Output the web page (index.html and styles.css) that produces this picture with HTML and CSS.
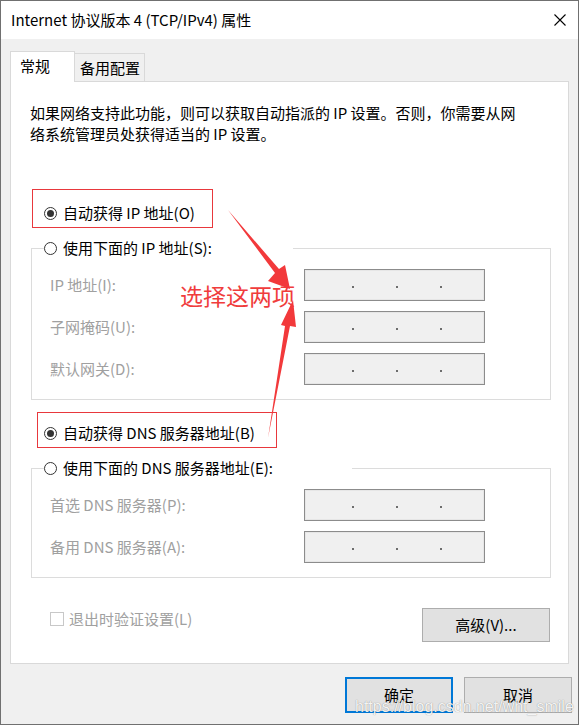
FILE: index.html
```html
<!DOCTYPE html>
<html lang="zh-CN">
<head>
<meta charset="utf-8">
<title>Internet 协议版本 4 (TCP/IPv4) 属性</title>
<link rel="stylesheet" href="styles.css">
</head>
<body>
<div class="stage">
  <div class="window">
    <div class="titlebar">
      <span class="title">Internet 协议版本 4 (TCP/IPv4) 属性</span>
      <svg class="close" width="12" height="12" viewBox="0 0 12 12"><path d="M0.5 0.5 L11.5 11.5 M11.5 0.5 L0.5 11.5" stroke="#000" stroke-width="1.1" fill="none"/></svg>
    </div>
    <div class="tabs">
      <div class="tab active">常规</div>
      <div class="tab inactive">备用配置</div>
    </div>
    <div class="panel">
      <p class="intro">如果网络支持此功能，则可以获取自动指派的 IP 设置。否则，你需要从网<br>络系统管理员处获得适当的 IP 设置。</p>

      <div class="radio-row row-ip"><span class="radio checked"></span><span>自动获得 IP 地址(O)</span></div>
      <fieldset class="group">
        <legend class="lg lg-ip"><span class="radio"></span><span>使用下面的 IP 地址(S):</span></legend>
        <div class="field"><label>IP 地址(I):</label><div class="ipbox"><i></i><i></i><i></i></div></div>
        <div class="field"><label>子网掩码(U):</label><div class="ipbox"><i></i><i></i><i></i></div></div>
        <div class="field"><label>默认网关(D):</label><div class="ipbox"><i></i><i></i><i></i></div></div>
      </fieldset>

      <div class="radio-row row-dns"><span class="radio checked"></span><span>自动获得 DNS 服务器地址(B)</span></div>
      <fieldset class="group">
        <legend class="lg lg-dns"><span class="radio"></span><span>使用下面的 DNS 服务器地址(E):</span></legend>
        <div class="field"><label>首选 DNS 服务器(P):</label><div class="ipbox"><i></i><i></i><i></i></div></div>
        <div class="field"><label>备用 DNS 服务器(A):</label><div class="ipbox"><i></i><i></i><i></i></div></div>
      </fieldset>

      <div class="bottom-row">
        <div class="check"><span class="cbox"></span><span>退出时验证设置(L)</span></div>
        <button class="btn adv">高级(V)...</button>
      </div>
    </div>
    <div class="footer">
      <button class="btn dlg default">确定</button>
      <button class="btn dlg">取消</button>
    </div>
  </div>

  <div class="annot-box box1"></div>
  <div class="annot-box box2"></div>
  <div class="annot-text">选择这两项</div>
  <svg class="arrows" width="581" height="726" viewBox="0 0 581 726">
    <polygon points="228,210 279,269 285,265 290,289 268,281 275,273" fill="#f2393b"/>
    <polygon points="268,438 285,326 281,325 293,300 296,327 290,326" fill="#f2393b"/>
  </svg>
  <div class="wm">https://blog.csdn.net/wht_smile</div>
</div>
</body>
</html>
```
FILE: styles.css
```css
body {
  margin: 0;
  background: #fff;
  font-family: "Noto Sans CJK SC", sans-serif;
  font-size: 15px;
  color: #000;
}

.stage {
  position: relative;
  width: 581px;
  height: 726px;
  overflow: hidden;
}

.window {
  width: 579px;
  height: 725px;
  box-sizing: border-box;
  border: 1px solid #707070;
  background: #f0f0f0;
  display: flex;
  flex-direction: column;
}

.titlebar {
  flex: none;
  height: 38px;
  background: #fff;
  display: flex;
  align-items: center;
  justify-content: space-between;
  padding: 0 12px 0 10px;
}

.title {
  line-height: 20px;
}

.close {
  display: block;
}

.tabs {
  flex: none;
  display: flex;
  align-items: flex-end;
  height: 31px;
  padding-left: 9px;
  margin-top: 12px;
  margin-bottom: -1px;
  position: relative;
  z-index: 1;
}

.tab {
  box-sizing: border-box;
  border: 1px solid #d9d9d9;
  border-bottom: none;
  line-height: 21px;
}

.tab.active {
  width: 65px;
  height: 31px;
  background: #fff;
  padding: 3px 0 0 9px;
}

.tab.inactive {
  width: 71px;
  height: 28px;
  margin-left: -1px;
  margin-bottom: 1px;
  background: #f0f0f0;
  padding: 3px 0 0 5px;
}

.panel {
  flex: none;
  margin: 0 9px;
  height: 583px;
  box-sizing: border-box;
  border: 1px solid #d9d9d9;
  background: #fff;
  padding: 20px 17px 0 20px;
}

.intro {
  margin: 0 0 0 -1px;
  line-height: 21px;
}

.radio-row {
  display: flex;
  align-items: center;
  gap: 6px;
  height: 20px;
  line-height: 20px;
  padding-left: 13px;
}

.row-ip { margin-top: 59px; }
.row-dns { margin-top: 23px; }

.radio {
  flex: none;
  width: 13px;
  height: 13px;
  box-sizing: border-box;
  border: 1px solid #333;
  border-radius: 50%;
  background: #fff;
  display: flex;
  align-items: center;
  justify-content: center;
}

.radio.checked::after {
  content: "";
  width: 7px;
  height: 7px;
  border-radius: 50%;
  background: #333;
}

.group {
  margin: 15px 0 0;
  padding: 11px 64px 14px 0;
  border: 1px solid #dcdcdc;
  min-width: 0;
}

.lg {
  padding: 0;
  margin-left: 12px;
  display: flex;
  align-items: center;
  gap: 6px;
  height: 20px;
  line-height: 20px;
}

.lg-ip { width: 249px; }
.lg-dns { width: 308px; }

.field {
  display: flex;
  align-items: center;
  height: 32px;
  padding-left: 18px;
}

.field + .field { margin-top: 10px; }

.field label {
  width: 254px;
  flex: none;
  color: #a0a0a0;
  line-height: 20px;
}

.ipbox {
  flex: none;
  width: 181px;
  height: 32px;
  box-sizing: border-box;
  border: 1px solid #8c8c8c;
  box-shadow: inset 0 0 0 1px #e6e6e6;
  background: #f0f0f0;
  display: flex;
  align-items: center;
  gap: 42px;
  padding: 4px 0 0 47px;
}

.ipbox i {
  display: block;
  width: 2px;
  height: 2px;
  background: #6d6d6d;
}

.bottom-row {
  display: flex;
  align-items: flex-start;
  margin-top: 30px;
}

.check {
  display: flex;
  align-items: center;
  gap: 5px;
  padding-left: 19px;
  margin-top: 1px;
  color: #a0a0a0;
  line-height: 20px;
}

.cbox {
  width: 14px;
  height: 14px;
  box-sizing: border-box;
  border: 1px solid #c8c8c8;
  background: #fff;
}

.btn {
  font: inherit;
  color: #000;
  box-sizing: border-box;
  background: #e1e1e1;
  border: 1px solid #adadad;
  padding: 0;
  line-height: 20px;
}

.btn.adv {
  width: 128px;
  height: 34px;
  margin-left: auto;
  margin-right: 1px;
}

.footer {
  flex: none;
  display: flex;
  gap: 11px;
  margin-top: 13px;
  padding-left: 344px;
}

.btn.dlg {
  width: 108px;
  height: 36px;
}

.btn.default {
  border: 2px solid #0078d7;
}

.annot-box {
  position: absolute;
  box-sizing: border-box;
  border: 1px solid #e8383d;
}

.box1 { left: 32px; top: 189px; width: 181px; height: 39px; }
.box2 { left: 37px; top: 412px; width: 240px; height: 36px; }

.annot-text {
  position: absolute;
  left: 180px;
  top: 284px;
  font-size: 23px;
  line-height: 23px;
  color: #f03c3c;
}

.arrows {
  position: absolute;
  left: 0;
  top: 0;
  pointer-events: none;
}

.wm {
  position: absolute;
  left: 355px;
  top: 697px;
  font-family: "Liberation Sans", Arial, sans-serif;
  font-size: 16px;
  line-height: 20px;
  color: rgba(255, 255, 255, 0.92);
  text-shadow: 0 0 1px rgba(0, 0, 0, 0.45);
  white-space: nowrap;
}
```
